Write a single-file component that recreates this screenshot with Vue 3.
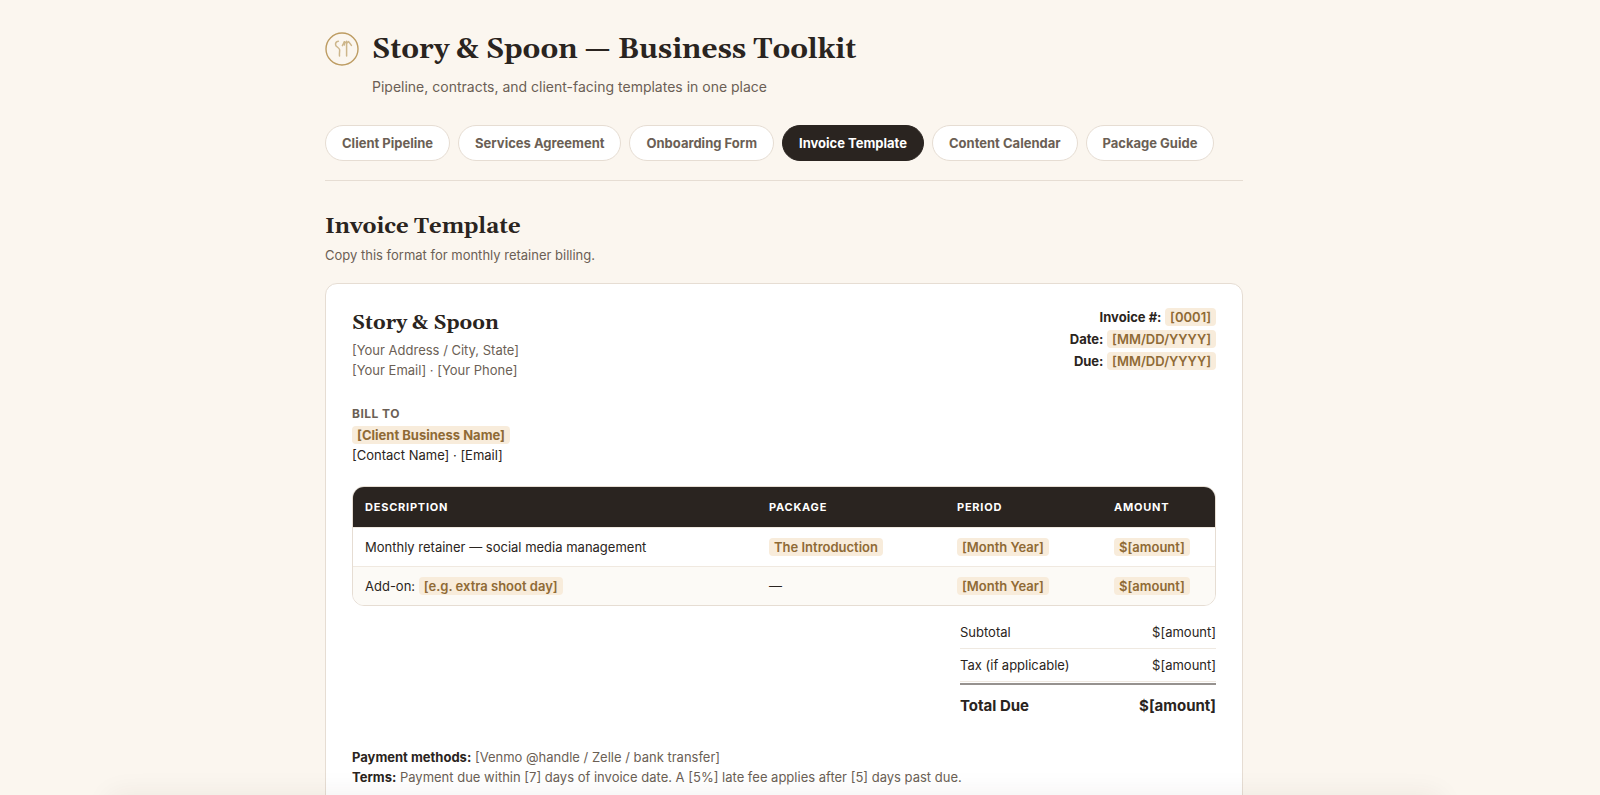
<script setup>
import { ref } from 'vue'

const tabs = [
  'Client Pipeline',
  'Services Agreement',
  'Onboarding Form',
  'Invoice Template',
  'Content Calendar',
  'Package Guide',
]
const active = ref('Invoice Template')

const meta = [
  { label: 'Invoice #:', value: '[0001]' },
  { label: 'Date:', value: '[MM/DD/YYYY]' },
  { label: 'Due:', value: '[MM/DD/YYYY]' },
]
</script>

<template>
  <div class="page">
    <header class="masthead">
      <svg class="logo" viewBox="0 0 34 34" fill="none" aria-hidden="true">
        <circle cx="17" cy="17" r="16" stroke="#bd9c62" stroke-width="1.4" />
        <g stroke="#cdb68b" stroke-width="1.5" stroke-linecap="round" stroke-linejoin="round">
          <path d="M13.4 9.2C11.4 9.6 10.3 11 10.6 12.8C10.9 14.8 14 15.6 14.6 17.6C14.9 18.8 14.2 20.4 14.5 24" />
          <path d="M21.6 9.2V24" />
          <path d="M17.4 13.6L19.4 9.8L21.6 11.2L23.6 9.6L26.4 13.4" />
          <path d="M19.4 9.8V13" />
        </g>
      </svg>
      <div>
        <h1>Story &amp; Spoon — Business Toolkit</h1>
        <p class="tagline">Pipeline, contracts, and client-facing templates in one place</p>
      </div>
    </header>

    <nav class="tabs" aria-label="Toolkit sections">
      <button
        v-for="tab in tabs"
        :key="tab"
        type="button"
        class="tab"
        :class="{ active: tab === active }"
        @click="active = tab"
      >{{ tab }}</button>
    </nav>

    <main>
      <h2>Invoice Template</h2>
      <p class="lead">Copy this format for monthly retainer billing.</p>

      <article class="card">
        <div class="top">
          <div class="sender">
            <h3>Story &amp; Spoon</h3>
            <p>[Your Address / City, State]<br>[Your Email] · [Your Phone]</p>
          </div>
          <div class="meta">
            <div v-for="m in meta" :key="m.label">
              <strong>{{ m.label }}</strong>&nbsp;<span class="tag">{{ m.value }}</span>
            </div>
          </div>
        </div>

        <section class="billto">
          <h4>Bill to</h4>
          <div><span class="tag client">[Client Business Name]</span></div>
          <div>[Contact Name] · [Email]</div>
        </section>

        <div class="frame">
          <table class="items">
            <colgroup>
              <col><col class="c-pack"><col class="c-period"><col class="c-amount">
            </colgroup>
            <thead>
              <tr><th>Description</th><th>Package</th><th>Period</th><th>Amount</th></tr>
            </thead>
            <tbody>
              <tr>
                <td>Monthly retainer — social media management</td>
                <td><span class="tag">The Introduction</span></td>
                <td><span class="tag">[Month Year]</span></td>
                <td><span class="tag">$[amount]</span></td>
              </tr>
              <tr>
                <td>Add-on: <span class="tag">[e.g. extra shoot day]</span></td>
                <td>—</td>
                <td><span class="tag">[Month Year]</span></td>
                <td><span class="tag">$[amount]</span></td>
              </tr>
            </tbody>
          </table>
        </div>

        <dl class="totals">
          <div><dt>Subtotal</dt><dd>$[amount]</dd></div>
          <div><dt>Tax (if applicable)</dt><dd>$[amount]</dd></div>
          <div class="due"><dt>Total Due</dt><dd>$[amount]</dd></div>
        </dl>

        <p class="notes">
          <strong>Payment methods:</strong> [Venmo @handle / Zelle / bank transfer]<br>
          <strong>Terms:</strong> Payment due within [7] days of invoice date. A [5%] late fee applies after [5] days past due.
        </p>
      </article>
    </main>
    <div class="edge" aria-hidden="true"></div>
  </div>
</template>

<style>
html,
body {
  height: 100%;
  overflow: hidden;
  background: #fbf6ef;
}
</style>

<style scoped>
.page {
  max-width: 918px;
  margin: 0 auto;
  padding: 32px 32px 40px 0;
  color: #2a2420;
  font-family: Inter, "Liberation Sans", sans-serif;
  font-size: 13px;
  line-height: 20px;
}
h1, h2, h3, h4, p, dl, dd { margin: 0; }
h1, h2, h3 {
  font-family: Georgia, Gelasio, "Liberation Serif", serif;
  font-weight: 700;
}
.masthead { display: flex; gap: 13px; }
.logo { width: 34px; height: 34px; flex: none; }
h1 { font-size: 28px; line-height: 37px; }
.tagline { margin-top: 8px; font-size: 14px; color: #6b5f55; }
.tabs {
  display: flex;
  gap: 8px;
  margin-top: 28px;
  padding-bottom: 19px;
  border-bottom: 1px solid #e6ddd3;
}
.tab {
  height: 36px;
  padding: 0 16px;
  border: 1px solid #e6ddd3;
  border-radius: 18px;
  background: #fff;
  color: #6b5f55;
  font: 700 13px/20px Inter, "Liberation Sans", sans-serif;
  white-space: nowrap;
  cursor: pointer;
}
.tab.active { background: #2a2420; border-color: #2a2420; color: #fff; }
h2 { margin-top: 30px; font-size: 22px; line-height: 32px; }
.lead { margin-top: 2px; color: #6b5f55; }
.card {
  margin-top: 18px;
  padding: 22px 26px;
  border: 1px solid #e6ddd3;
  border-radius: 12px;
  background: #fff;
}
.top { display: flex; justify-content: space-between; }
h3 { font-size: 20px; line-height: 30px; }
.sender { padding-top: 2px; }
.sender p { margin-top: 2px; color: #6b5f55; }
.meta { text-align: right; line-height: 22px; }
.tag {
  padding: 1px 5px;
  border-radius: 4px;
  background: #f8ecdb;
  color: #8f6a35;
  font-weight: 600;
}
.tag.client { font-weight: 700; }
.billto { margin-top: 22px; }
h4 {
  font-size: 12px;
  line-height: 23px;
  letter-spacing: 0.04em;
  text-transform: uppercase;
  color: #6b5f55;
}
.frame {
  margin-top: 21px;
  border: 1px solid #e6ddd3;
  border-radius: 12px;
  overflow: hidden;
}
.items { width: 100%; border-collapse: collapse; table-layout: fixed; }
.c-pack { width: 188px; }
.c-period { width: 157px; }
.c-amount { width: 113px; }
.items th {
  padding: 10px 12px;
  background: #2a2420;
  color: #fff;
  font-size: 11px;
  letter-spacing: 0.07em;
  text-align: left;
  text-transform: uppercase;
}
.items td { padding: 9px 12px; border-top: 1px solid #f0e9e0; }
.items tbody tr:nth-child(2) td { background: #fcfaf6; }
.totals { width: 256px; margin: 10px 0 0 auto; }
.totals div {
  display: flex;
  justify-content: space-between;
  padding: 6px 0;
  border-bottom: 1px solid #efe9e1;
}
.totals .due {
  margin-top: 1px;
  padding: 11px 0;
  border-top: 2px solid #96928f;
  border-bottom: 0;
  font-size: 15px;
  font-weight: 700;
}
.notes { margin-top: 20px; color: #6b5f55; }
.notes strong { color: #2a2420; }
.edge {
  position: fixed;
  top: 100%;
  left: 110px;
  right: 160px;
  height: 40px;
  box-shadow: 0 0 28px rgba(60, 40, 20, 0.07);
}
</style>
